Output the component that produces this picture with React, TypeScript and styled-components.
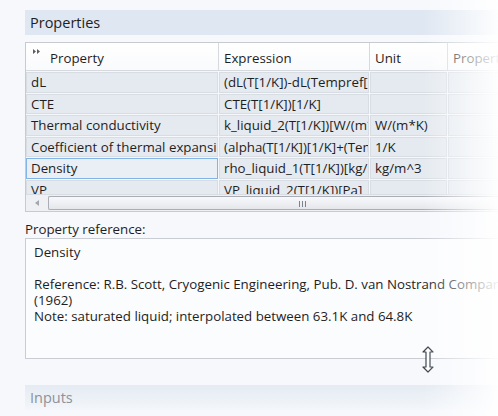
import styled, { createGlobalStyle } from 'styled-components'

const GlobalStyle = createGlobalStyle`
    html, body {
        margin: 0;
        padding: 0;
        background: #f6f8fc;
        overflow: hidden;
    }
    body {
        font-family: 'Open Sans', 'Noto Sans', sans-serif;
        color: #1e1e1e;
    }
`

type Row = {
    property: string
    expression: string
    unit: string
    selected?: boolean
}

const rows: Row[] = [
    { property: 'dL', expression: '(dL(T[1/K])-dL(Tempref[1/K]))/(1-dL(Tempref[1/K]))', unit: '' },
    { property: 'CTE', expression: 'CTE(T[1/K])[1/K]', unit: '' },
    { property: 'Thermal conductivity', expression: 'k_liquid_2(T[1/K])[W/(m*K)]', unit: 'W/(m*K)' },
    { property: 'Coefficient of thermal expansion', expression: '(alpha(T[1/K])[1/K]+(Tempref-293.15[K])', unit: '1/K' },
    { property: 'Density', expression: 'rho_liquid_1(T[1/K])[kg/m^3]', unit: 'kg/m^3', selected: true },
    { property: 'VP', expression: 'VP_liquid_2(T[1/K])[Pa]', unit: '' },
]

const App = () => {
    return (
        <Page>
            <GlobalStyle />
            <SectionBar>Properties</SectionBar>
            <Table>
                <HeadRow>
                    <HeadCell $indent>
                        <Chevrons width="7" height="5" viewBox="0 0 7 5">
                            <path d="M0 0 L3 2.5 L0 5 Z M4 0 L7 2.5 L4 5 Z" fill="#5a5f66" />
                        </Chevrons>
                        Property
                    </HeadCell>
                    <HeadCell>Expression</HeadCell>
                    <HeadCell>Unit</HeadCell>
                    <HeadCell>Property group</HeadCell>
                </HeadRow>
                <Body>
                    {rows.map((row) => (
                        <DataRow key={row.property}>
                            <Cell $selected={row.selected}>{row.property}</Cell>
                            <Cell>{row.expression}</Cell>
                            <Cell>{row.unit}</Cell>
                            <Cell />
                        </DataRow>
                    ))}
                </Body>
                <ScrollBar>
                    <ArrowBox>
                        <svg width="4" height="6" viewBox="0 0 4 6">
                            <path d="M4 0 L0 3 L4 6 Z" fill="#a3a8b0" />
                        </svg>
                    </ArrowBox>
                    <Thumb>
                        <Grip />
                    </Thumb>
                </ScrollBar>
            </Table>

            <Label>Property reference:</Label>
            <RefBox>
                <Line>Density</Line>
                <Line>&nbsp;</Line>
                <Line>
                    Reference: R.B. Scott, Cryogenic Engineering, Pub. D. van Nostrand Company
                </Line>
                <Line>(1962)</Line>
                <Line>Note: saturated liquid; interpolated between 63.1K and 64.8K</Line>
                <ResizeCursor width="12" height="27" viewBox="0 0 12 27">
                    <path
                        d="M6 1 L11 6 L8 6 L8 21 L11 21 L6 26 L1 21 L4 21 L4 6 L1 6 Z"
                        fill="#ffffff"
                        stroke="#3a3f4a"
                        strokeWidth="1.2"
                        strokeLinejoin="round"
                    />
                </ResizeCursor>
            </RefBox>

            <SectionBar $muted>Inputs</SectionBar>
            <Fade />
        </Page>
    )
}

export default App

const Page = styled.div`
    position: relative;
    width: 498px;
    height: 416px;
    padding: 10px 0 0 25px;
    box-sizing: border-box;
    overflow: hidden;
`
const SectionBar = styled.div<{ $muted?: boolean }>`
    width: 520px;
    height: 25px;
    line-height: 26px;
    padding-left: 5px;
    font-size: 14.5px;
    color: ${(p) => (p.$muted ? '#8d9199' : '#1e1e1e')};
    background: ${(p) => (p.$muted ? 'linear-gradient(#e5ebf3, #f3f6fa)' : '#dfe7f2')};
    margin-top: ${(p) => (p.$muted ? '26px' : '0')};
`
const Table = styled.div`
    margin-top: 7px;
    width: 520px;
    border: 1px solid #c6cad1;
    border-right: none;
    background: #f5f7fa;
`
const colTemplate = '193px 151px 78px 98px'
const HeadRow = styled.div`
    display: grid;
    grid-template-columns: ${colTemplate};
    height: 27px;
    background: linear-gradient(#ffffff, #f9fafc);
    border-bottom: 1px solid #d6d9de;
`
const HeadCell = styled.div<{ $indent?: boolean }>`
    display: flex;
    align-items: center;
    padding-left: ${(p) => (p.$indent ? '24px' : '5px')};
    padding-top: 2px;
    font-size: 13.3px;
    border-right: 1px solid #d6d9de;
    white-space: nowrap;
    overflow: hidden;
    position: relative;
`
const Chevrons = styled.svg`
    position: absolute;
    left: 7px;
    top: 6px;
`
const Body = styled.div`
    height: 123px;
    overflow: hidden;
`
const DataRow = styled.div`
    display: grid;
    grid-template-columns: ${colTemplate};
    height: 21.5px;
`
const Cell = styled.div<{ $selected?: boolean }>`
    box-sizing: border-box;
    margin: 1px 1px 0 0;
    padding: 0 4px;
    font-size: 13.3px;
    line-height: 19px;
    white-space: nowrap;
    overflow: hidden;
    background: ${(p) => (p.$selected ? '#eaeff5' : '#e5eaf0')};
    border: 1px solid ${(p) => (p.$selected ? '#82b4e8' : '#d8dde3')};
`
const ScrollBar = styled.div`
    display: flex;
    height: 16px;
    background: #eef0f3;
    border-top: 1px solid #d9dce1;
`
const ArrowBox = styled.div`
    width: 21px;
    display: flex;
    align-items: center;
    justify-content: center;
`
const Thumb = styled.div`
    flex: 1;
    margin: 1px 0 1px 1px;
    border: 1px solid #a9aeb6;
    border-right: none;
    border-radius: 2px 0 0 2px;
    background: linear-gradient(#f8f9fb, #e4e7eb);
    position: relative;
`
const Grip = styled.div`
    position: absolute;
    left: 250px;
    top: 4px;
    width: 8px;
    height: 6px;
    background: repeating-linear-gradient(90deg, #7d838c 0 1px, transparent 1px 3px);
`
const Label = styled.div`
    margin-top: 9px;
    font-size: 13.3px;
    line-height: 16px;
`
const RefBox = styled.div`
    position: relative;
    width: 520px;
    height: 121px;
    margin-top: 1px;
    box-sizing: border-box;
    padding: 5px 8px;
    background: #fbfcfe;
    border: 1px solid #c9ccd2;
    border-right: none;
`
const Line = styled.div`
    font-size: 13.3px;
    line-height: 16px;
    white-space: nowrap;
`
const ResizeCursor = styled.svg`
    position: absolute;
    left: 396px;
    top: 107px;
`
const Fade = styled.div`
    position: absolute;
    top: 0;
    right: 0;
    width: 75px;
    height: 100%;
    background: linear-gradient(90deg, rgba(255, 255, 255, 0), rgba(255, 255, 255, 0.95));
    pointer-events: none;
`
